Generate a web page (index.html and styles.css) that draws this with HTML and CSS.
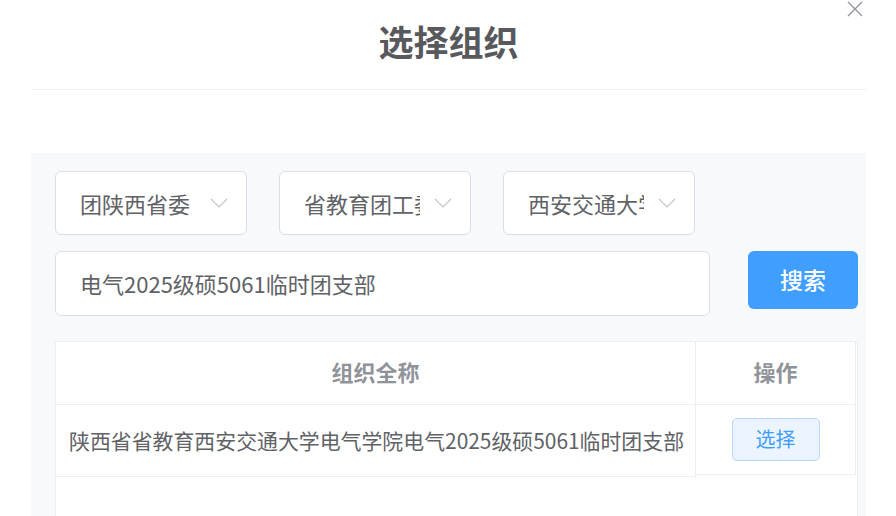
FILE: index.html
```html
<!DOCTYPE html>
<html lang="zh-CN">
<head>
<meta charset="utf-8">
<title>选择组织</title>
<link rel="stylesheet" href="styles.css">
</head>
<body>
<div class="dialog">
  <div class="dialog-header">
    <h1 class="dialog-title">选择组织</h1>
    <button class="close-btn" aria-label="关闭">
      <svg width="16" height="16" viewBox="0 0 16 16"><path d="M1 1L15 15M15 1L1 15" stroke="#909399" stroke-width="1.3" fill="none"/></svg>
    </button>
  </div>
  <div class="dialog-body">
    <div class="panel">
      <div class="select-row">
        <div class="select"><span class="select-text">团陕西省委</span><svg class="chevron" width="18" height="10" viewBox="0 0 18 10"><path d="M1 1L9 9L17 1" stroke="#c0c4cc" stroke-width="1.2" fill="none"/></svg></div>
        <div class="select"><span class="select-text">省教育团工委</span><svg class="chevron" width="18" height="10" viewBox="0 0 18 10"><path d="M1 1L9 9L17 1" stroke="#c0c4cc" stroke-width="1.2" fill="none"/></svg></div>
        <div class="select"><span class="select-text">西安交通大学</span><svg class="chevron" width="18" height="10" viewBox="0 0 18 10"><path d="M1 1L9 9L17 1" stroke="#c0c4cc" stroke-width="1.2" fill="none"/></svg></div>
      </div>
      <div class="search-row">
        <div class="input">电气2025级硕5061临时团支部</div>
        <button class="search-btn">搜索</button>
      </div>
      <div class="table">
        <div class="thead">
          <div class="th col1">组织全称</div>
          <div class="th col2">操作</div>
        </div>
        <div class="trow">
          <div class="td col1">陕西省省教育西安交通大学电气学院电气2025级硕5061临时团支部</div>
          <div class="td col2"><button class="pick-btn">选择</button></div>
        </div>
        <div class="tempty"></div>
      </div>
    </div>
  </div>
</div>
</body>
</html>
```

FILE: styles.css
```css
* { box-sizing: border-box; }
html, body { margin: 0; padding: 0; background: #fff; overflow: hidden; }
body {
  font-family: "Noto Sans CJK SC", "Noto Sans", sans-serif;
  color: #606266;
  width: 896px;
  height: 516px;
}
.dialog { position: relative; width: 896px; }
.dialog-header {
  margin: 0 30px 0 31px;
  height: 90px;
  border-bottom: 1px solid #eef0f4;
  padding-top: 21px;
  text-align: center;
}
.dialog-title {
  margin: 0;
  font-size: 35px;
  line-height: 40px;
  font-weight: 700;
  color: #58595c;
}
.close-btn {
  position: absolute;
  top: 1px;
  right: 33px;
  width: 16px;
  height: 16px;
  padding: 0;
  border: 0;
  background: none;
}
.close-btn svg { display: block; }
.dialog-body { padding: 63px 30px 0 31px; }
.panel {
  background: #f8f9fb;
  padding: 18px 8px 0 24px;
  height: 363px;
  overflow: hidden;
}
.select-row { display: flex; gap: 32px; }
.select {
  width: 192px;
  height: 64px;
  background: #fff;
  border: 1px solid #dcdfe6;
  border-radius: 6px;
  display: flex;
  align-items: center;
  padding-left: 24px;
  padding-right: 18px;
}
.select-text {
  width: 116px;
  overflow: hidden;
  white-space: nowrap;
  font-size: 22px;
  line-height: 30px;
  color: #606266;
}
.chevron { margin-left: auto; display: block; }
.search-row { display: flex; align-items: flex-start; margin-top: 16px; }
.input {
  width: 656px;
  height: 65px;
  background: #fff;
  border: 1px solid #dcdfe6;
  border-radius: 6px;
  padding-left: 24px;
  padding-bottom: 2px;
  display: flex;
  align-items: center;
  font-size: 22px;
  color: #606266;
}
.search-btn {
  margin-left: 38px;
  width: 110px;
  height: 58px;
  border: 0;
  border-radius: 6px;
  background: #409eff;
  color: #fff;
  font-family: inherit;
  font-size: 23px;
  font-weight: 500;
  padding: 0 0 3px;
}
.table {
  margin-top: 25px;
  width: 803px;
  background: #fff;
  border: 1px solid #ebeef5;
  border-bottom: 0;
  height: 176px;
}
.thead, .trow {
  display: grid;
  grid-template-columns: 640px 160px;
}
.th {
  height: 63px;
  display: flex;
  align-items: center;
  justify-content: center;
  padding-bottom: 5px;
  font-size: 22px;
  font-weight: 700;
  color: #909399;
  border-bottom: 1px solid #ebeef5;
}
.th.col1, .td.col1 { border-right: 1px solid #ebeef5; }
.th.col2, .td.col2 { border-right: 1px solid #ebeef5; }
.td {
  display: flex;
  align-items: center;
  border-bottom: 1px solid #ebeef5;
}
.td.col1 {
  padding-left: 13px;
  padding-bottom: 2px;
  font-size: 20.9px;
  color: #606266;
  white-space: nowrap;
  overflow: hidden;
  height: 72px;
}
.td.col2 { justify-content: center; height: 70px; }
.pick-btn {
  width: 88px;
  height: 43px;
  background: #ecf5ff;
  border: 1px solid #b3d8ff;
  border-radius: 5px;
  color: #409eff;
  font-family: inherit;
  font-size: 20px;
  padding: 0 0 2px;
}
```
